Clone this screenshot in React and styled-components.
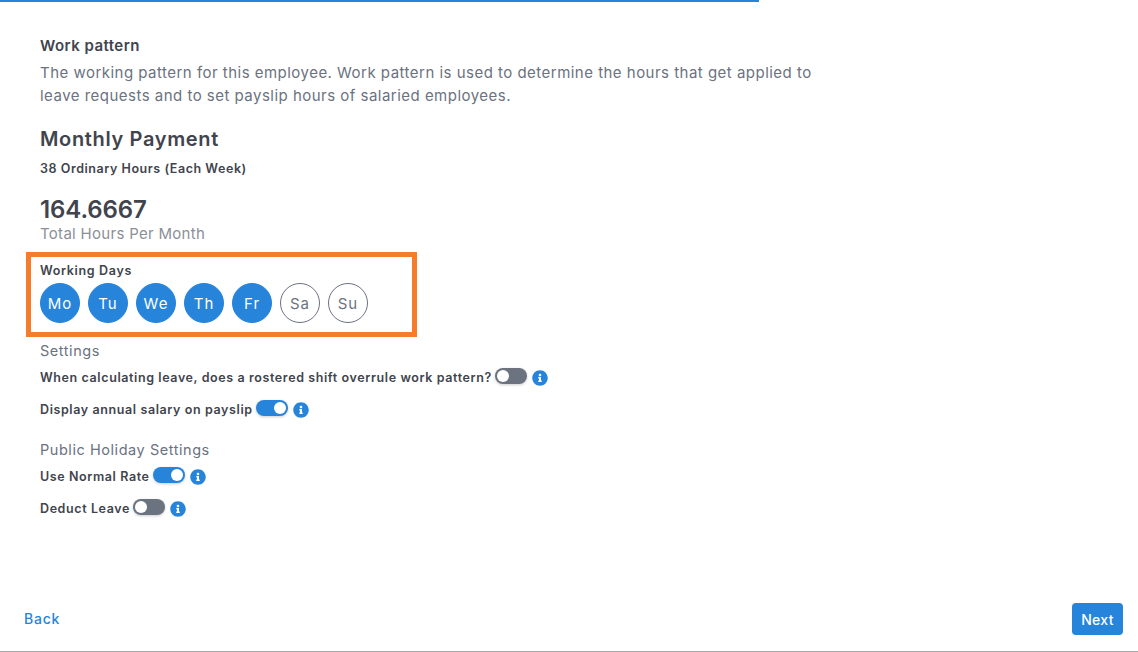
import styled, {createGlobalStyle} from 'styled-components';
import {FaInfoCircle} from 'react-icons/fa';

const days = [
    {label: 'Mo', active: true},
    {label: 'Tu', active: true},
    {label: 'We', active: true},
    {label: 'Th', active: true},
    {label: 'Fr', active: true},
    {label: 'Sa', active: false},
    {label: 'Su', active: false},
];

function ToggleRow({label, on}) {
    return (
        <Row>
            <RowLabel>{label}</RowLabel>
            <Track $on={on}><Thumb $on={on}/></Track>
            <InfoIcon/>
        </Row>
    );
}

export default function App() {
    return (
        <Page>
            <GlobalStyle/>
            <ProgressTrack><ProgressFill/></ProgressTrack>
            <Content>
                <Title>Work pattern</Title>
                <Description>
                    The working pattern for this employee. Work pattern is used to determine the hours that get applied to
                    leave requests and to set payslip hours of salaried employees.
                </Description>
                <Heading>Monthly Payment</Heading>
                <SubHeading>38 Ordinary Hours (Each Week)</SubHeading>
                <BigNumber>164.6667</BigNumber>
                <MutedLabel>Total Hours Per Month</MutedLabel>
                <DaysBox>
                    <DaysLabel>Working Days</DaysLabel>
                    <DaysRow>
                        {days.map(d => <Day key={d.label} $active={d.active}>{d.label}</Day>)}
                    </DaysRow>
                </DaysBox>
                <SectionTitle $top={5}>Settings</SectionTitle>
                <ToggleRow label="When calculating leave, does a rostered shift overrule work pattern?" on={false}/>
                <ToggleRow label="Display annual salary on payslip" on/>
                <SectionTitle $top={17}>Public Holiday Settings</SectionTitle>
                <ToggleRow label="Use Normal Rate" on/>
                <ToggleRow label="Deduct Leave" on={false}/>
            </Content>
            <Footer>
                <BackLink>Back</BackLink>
                <NextButton>Next</NextButton>
            </Footer>
        </Page>
    );
}

const GlobalStyle = createGlobalStyle`
    html, body {
        margin: 0;
        padding: 0;
        background: #fff;
    }
    body {
        font-family: Inter, "Open Sans", sans-serif;
    }
`;

const Page = styled.div`
    width: 1138px;
    height: 652px;
    box-sizing: border-box;
    border-bottom: 1px solid #a8a8a8;
    display: flex;
    flex-direction: column;
    overflow: hidden;
`;

const ProgressTrack = styled.div`
    height: 2px;
    flex: none;
`;

const ProgressFill = styled.div`
    width: 759px;
    height: 100%;
    background: #2684db;
`;

const Content = styled.div`
    flex: 1;
    padding: 34px 0 0 40px;
    display: flex;
    flex-direction: column;
    align-items: flex-start;
`;

const Title = styled.div`
    font-size: 15px;
    line-height: 20px;
    font-weight: 600;
    letter-spacing: 0.45px;
    color: #41444d;
`;

const Description = styled.div`
    width: 790px;
    margin-top: 5px;
    font-size: 15px;
    line-height: 23px;
    letter-spacing: 0.48px;
    color: #6b7280;
`;

const Heading = styled.div`
    margin-top: 18px;
    font-size: 20px;
    line-height: 28px;
    font-weight: 600;
    letter-spacing: 0.65px;
    color: #41444d;
`;

const SubHeading = styled.div`
    margin-top: 7px;
    font-size: 12.5px;
    line-height: 18px;
    font-weight: 600;
    letter-spacing: 0.55px;
    color: #41444d;
`;

const BigNumber = styled.div`
    margin-top: 16px;
    font-size: 24px;
    line-height: 31px;
    font-weight: 600;
    letter-spacing: -0.1px;
    color: #41444d;
`;

const MutedLabel = styled.div`
    font-size: 15px;
    line-height: 18px;
    letter-spacing: 0.3px;
    color: #8b8f98;
`;

const DaysBox = styled.div`
    box-sizing: border-box;
    width: 391px;
    height: 85px;
    margin: 9px 0 0 -14px;
    padding: 5px 9px 0;
    border: 5px solid #f47c2a;
`;

const DaysLabel = styled.div`
    font-size: 12.5px;
    line-height: 18px;
    font-weight: 600;
    letter-spacing: 0.65px;
    color: #41444d;
`;

const DaysRow = styled.div`
    display: flex;
    gap: 8px;
    margin-top: 3px;
`;

const Day = styled.div`
    box-sizing: border-box;
    width: 40px;
    height: 40px;
    border-radius: 50%;
    display: flex;
    align-items: center;
    justify-content: center;
    font-size: 15px;
    letter-spacing: 1px;
    background: ${p => (p.$active ? '#2684db' : '#fff')};
    color: ${p => (p.$active ? '#fff' : '#6b7280')};
    border: 1px solid ${p => (p.$active ? '#2684db' : '#6b7280')};
`;

const SectionTitle = styled.div`
    margin-top: ${p => p.$top}px;
    font-size: 14.5px;
    line-height: 18px;
    letter-spacing: 0.55px;
    color: #6b7280;
`;

const Row = styled.div`
    display: flex;
    align-items: center;
    height: 20px;
    margin-top: 7px;
    margin-bottom: 5px;
    gap: 3px;
`;

const RowLabel = styled.span`
    font-size: 12.5px;
    font-weight: 600;
    letter-spacing: 0.6px;
    color: #41444d;
`;

const Track = styled.div`
    position: relative;
    width: 32px;
    height: 16px;
    margin-top: -2px;
    border-radius: 8px;
    background: ${p => (p.$on ? '#2684db' : '#6b7280')};
    box-shadow: 0 1px 3px rgba(0, 0, 0, 0.2);
`;

const Thumb = styled.div`
    position: absolute;
    top: 2px;
    left: ${p => (p.$on ? '18px' : '2px')};
    width: 12px;
    height: 12px;
    border-radius: 50%;
    background: #fff;
`;

const InfoIcon = styled(FaInfoCircle)`
    width: 16px;
    height: 16px;
    margin: 2px 0 0 2px;
    color: #2684db;
`;

const Footer = styled.div`
    flex: none;
    display: flex;
    align-items: center;
    justify-content: space-between;
    padding: 0 15px 16px 24px;
`;

const BackLink = styled.a`
    margin-bottom: 1px;
    font-size: 14px;
    font-weight: 500;
    letter-spacing: 0.8px;
    color: #2684db;
`;

const NextButton = styled.button`
    width: 51px;
    height: 32px;
    padding: 0;
    border: none;
    border-radius: 4px;
    background: #2684db;
    color: #fff;
    font-family: inherit;
    font-size: 14px;
    font-weight: 500;
    letter-spacing: 0.3px;
`;
